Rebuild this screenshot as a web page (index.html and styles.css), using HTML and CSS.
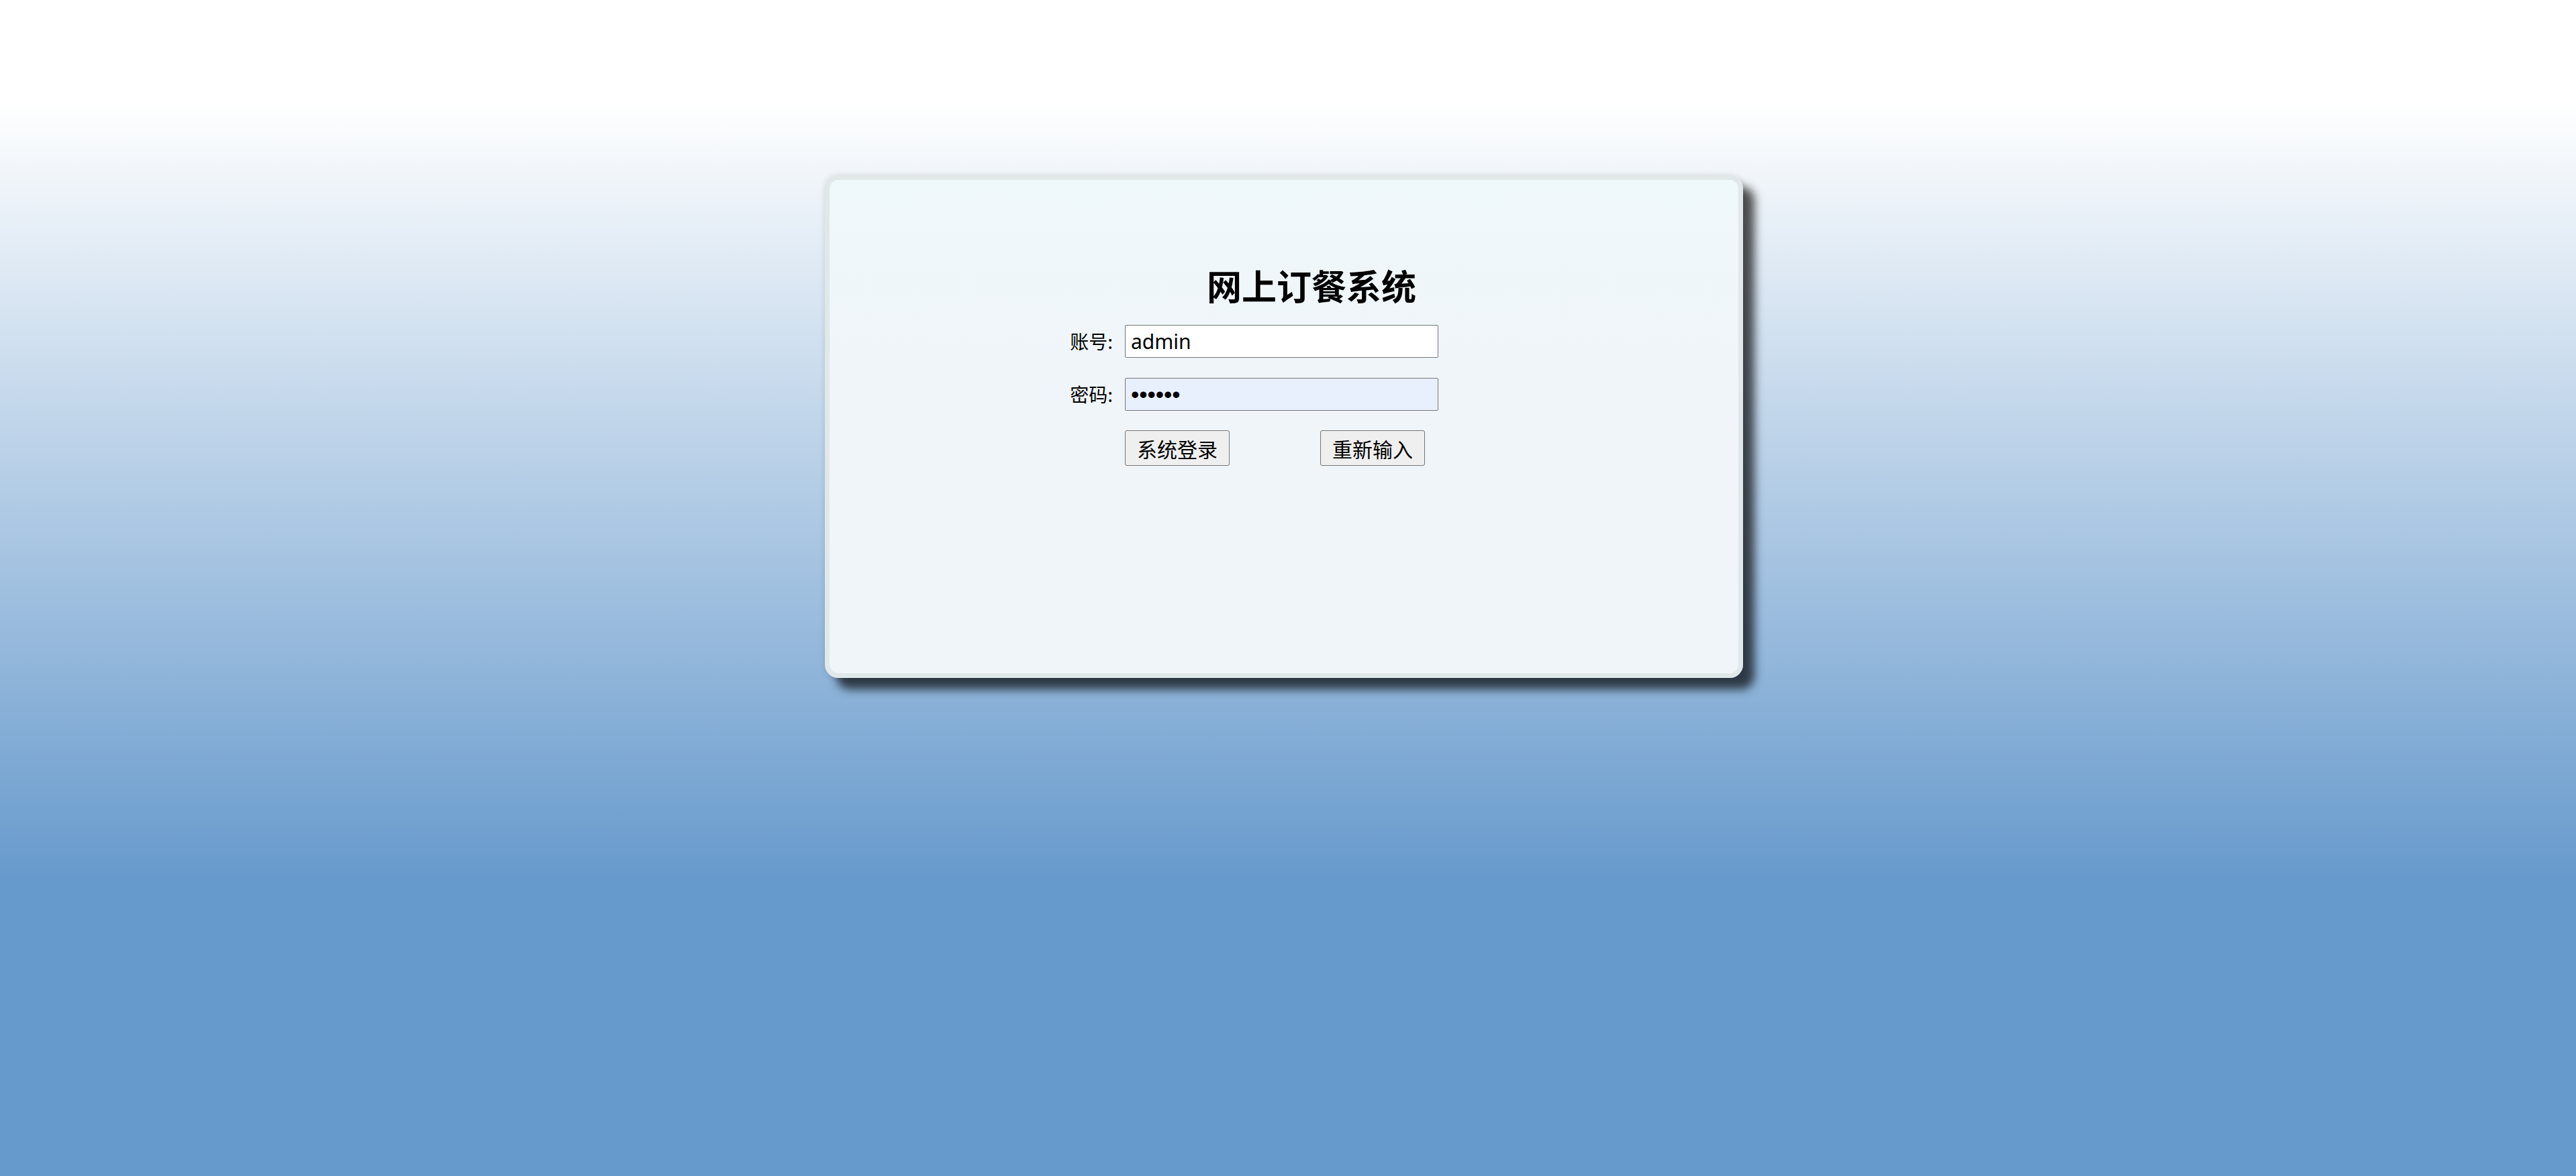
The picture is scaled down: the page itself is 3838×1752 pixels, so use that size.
FILE: index.html
```html
<!DOCTYPE html>
<html lang="zh-CN">
<head>
<meta charset="utf-8">
<title>网上订餐系统</title>
<link rel="stylesheet" href="styles.css">
</head>
<body>
<div class="page">
  <div class="card">
    <h1 class="title">网上订餐系统</h1>
    <form class="form">
      <label class="label" for="user">账号:</label>
      <input class="field" id="user" type="text" value="admin">
      <label class="label" for="pwd">密码:</label>
      <input class="field field-auto" id="pwd" type="password" value="123456">
      <div class="actions">
        <button class="btn" type="button">系统登录</button>
        <button class="btn" type="reset">重新输入</button>
      </div>
    </form>
  </div>
</div>
</body>
</html>
```
FILE: styles.css
```css
html, body {
  margin: 0;
  padding: 0;
  height: 100%;
}

body {
  background: linear-gradient(to bottom, #ffffff 0px, #ffffff 150px, #6699cc 1320px, #6699cc 100%);
  font-family: "Noto Sans CJK SC", "Noto Sans", sans-serif;
  color: #000;
}

.page {
  padding-top: 261px;
}

.card {
  box-sizing: border-box;
  width: 1368px;
  height: 749px;
  margin-left: calc(50% - 690px);
  border: 7px solid #e0e8ea;
  border-radius: 20px;
  background: linear-gradient(to bottom, #eff8fb 0%, #f0f5f9 40%, #f0f5f9 100%);
  box-shadow: 17px 17px 14px rgba(0, 0, 0, 0.68), 0 0 10px rgba(0, 0, 0, 0.12);
  padding-top: 131px;
}

.title {
  margin: 0;
  padding-left: 562px;
  font-family: "Noto Sans CJK SC", sans-serif;
  font-weight: 700;
  font-size: 52px;
  line-height: 52px;
  letter-spacing: 0;
}

.form {
  display: grid;
  grid-template-columns: 100px 467px;
  column-gap: 18px;
  row-gap: 30px;
  align-items: center;
  padding-left: 322px;
  margin-top: 33px;
}

.label {
  text-align: right;
  font-family: "Noto Sans CJK SC", sans-serif;
  font-size: 28px;
  line-height: 49px;
  color: #000;
}

.field {
  box-sizing: border-box;
  width: 467px;
  height: 49px;
  margin: 0;
  padding: 0 8px;
  border: 1px solid #767676;
  border-radius: 2px;
  background: #ffffff;
  font-family: "Noto Sans", sans-serif;
  font-size: 30px;
  color: #000;
  outline: none;
}

.field-auto {
  background: #e8f0fe;
  font-family: "Liberation Sans", sans-serif;
  font-size: 35px;
}

.actions {
  grid-column: 2;
  display: flex;
  gap: 135px;
  margin-top: -1px;
}

.btn {
  box-sizing: border-box;
  width: 156px;
  height: 53px;
  margin: 0;
  padding: 0;
  border: 1px solid #767676;
  border-radius: 3px;
  background: #efefef;
  font-family: "Noto Sans CJK SC", sans-serif;
  font-size: 30px;
  line-height: 1;
  color: #000;
}
```
